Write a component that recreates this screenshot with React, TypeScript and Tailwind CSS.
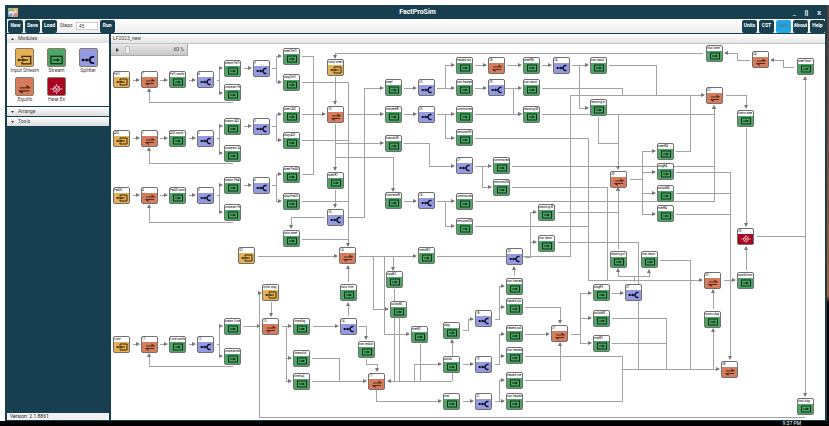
import type { ReactNode } from "react";

type Kind = "input" | "stream" | "splitter" | "equilib" | "heat";
type Node = [kind: Kind, x: number, y: number, label: string];

const colors: Record<Kind, string> = {
  input: "bg-[#e5b056]",
  stream: "bg-[#4fa567]",
  splitter: "bg-[#959be3]",
  equilib: "bg-[#d67c5c]",
  heat: "bg-[#a80522]",
};

const modules: { kind: Kind; name: string }[] = [
  { kind: "input", name: "Input Stream" },
  { kind: "stream", name: "Stream" },
  { kind: "splitter", name: "Splitter" },
  { kind: "equilib", name: "Equilib" },
  { kind: "heat", name: "Heat Ex" },
];

// Sheet coordinates of the canvas' top left corner
const ORIGIN_X = 111;
const ORIGIN_Y = 44;

const nodes: Node[] = [
  ["input", 113, 71, "FeTi"],
  ["equilib", 141, 71, "7"],
  ["stream", 169, 71, "FeTi comb"],
  ["splitter", 197, 71, "8"],
  ["stream", 224, 60, "steam FeTi"],
  ["stream", 224, 84, "unsteam Fe"],
  ["splitter", 253, 60, "9"],
  ["input", 113, 130, "AlO"],
  ["equilib", 141, 130, "1"],
  ["stream", 169, 130, "AlO comb"],
  ["splitter", 197, 130, "2"],
  ["stream", 224, 118, "steam AlO"],
  ["stream", 224, 145, "unsteam Al"],
  ["splitter", 253, 118, "3"],
  ["input", 113, 187, "FeAlO"],
  ["equilib", 141, 187, "4"],
  ["stream", 169, 187, "FeAlO com"],
  ["splitter", 197, 187, "5"],
  ["stream", 224, 177, "steam FeAl"],
  ["stream", 224, 204, "unsteam Fe"],
  ["splitter", 253, 177, "6"],
  ["input", 238, 247, "O2"],
  ["input", 113, 336, "Lime"],
  ["equilib", 141, 336, "11"],
  ["stream", 169, 336, "Lime comb"],
  ["splitter", 197, 336, "12"],
  ["stream", 224, 318, "steam Lime"],
  ["stream", 224, 348, "unsteamed"],
  ["input", 262, 284, "initial slag"],
  ["equilib", 262, 318, "13"],
  ["stream", 283, 48, "steel FeTi"],
  ["stream", 283, 74, "slag FeTi"],
  ["stream", 283, 106, "steel AlO"],
  ["stream", 283, 132, "slag AlO"],
  ["stream", 283, 166, "steel FeAlO"],
  ["stream", 283, 193, "slag FeAlO"],
  ["stream", 283, 230, "ratio steel"],
  ["input", 327, 59, "initial steel"],
  ["equilib", 327, 106, "15"],
  ["stream", 327, 172, "steelR1"],
  ["splitter", 327, 209, "16"],
  ["equilib", 339, 247, "14"],
  ["stream", 340, 284, "ratio lime"],
  ["splitter", 340, 318, "14"],
  ["stream", 293, 318, "limeslag"],
  ["stream", 293, 350, "limesolid"],
  ["stream", 293, 373, "limeliq2"],
  ["stream", 358, 341, "non reduct"],
  ["equilib", 368, 373, "17"],
  ["stream", 385, 79, "steel"],
  ["stream", 385, 106, "hotsteelR"],
  ["stream", 385, 135, "hotsolidR"],
  ["stream", 385, 192, "hotmetalR"],
  ["stream", 386, 271, "slagR2"],
  ["stream", 390, 301, "solidsR2"],
  ["stream", 411, 326, "metR2"],
  ["splitter", 418, 79, "23"],
  ["splitter", 418, 106, "25"],
  ["splitter", 418, 192, "26"],
  ["stream", 418, 247, "metalR2"],
  ["stream", 456, 57, "heated sla"],
  ["equilib", 488, 57, "28"],
  ["stream", 523, 57, "steelR5"],
  ["splitter", 553, 57, "24"],
  ["stream", 590, 57, "non reacti"],
  ["stream", 456, 79, "non heated"],
  ["splitter", 488, 79, "29"],
  ["stream", 523, 79, "non reacti"],
  ["stream", 456, 106, "unremoved"],
  ["stream", 523, 106, "reacting M"],
  ["stream", 590, 99, "reacting st"],
  ["stream", 456, 129, "removed N"],
  ["splitter", 456, 157, "27"],
  ["stream", 493, 157, "unremoved"],
  ["stream", 493, 179, "removed M"],
  ["stream", 456, 193, "unremoved"],
  ["stream", 456, 218, "removed M"],
  ["stream", 538, 204, "reacting M"],
  ["stream", 538, 235, "non reacti"],
  ["splitter", 506, 248, "20"],
  ["stream", 506, 278, "non heated"],
  ["stream", 506, 298, "heated sla"],
  ["stream", 506, 325, "heated soli"],
  ["stream", 506, 347, "non heated"],
  ["stream", 506, 372, "heated me"],
  ["stream", 506, 393, "non heated"],
  ["stream", 443, 322, "slag"],
  ["stream", 443, 356, "solids"],
  ["stream", 443, 393, "met"],
  ["splitter", 475, 310, "18"],
  ["splitter", 475, 356, "19"],
  ["splitter", 475, 393, "22"],
  ["equilib", 551, 325, "21"],
  ["stream", 593, 284, "slagR3"],
  ["stream", 593, 310, "solidsR3"],
  ["stream", 593, 335, "metR3"],
  ["splitter", 625, 284, "37"],
  ["equilib", 610, 171, "30"],
  ["stream", 610, 251, "reacting sl"],
  ["stream", 641, 251, "non reacti"],
  ["stream", 657, 143, "steelR4"],
  ["stream", 657, 163, "slagR4"],
  ["stream", 657, 185, "solidsR4"],
  ["stream", 657, 205, "metR4"],
  ["stream", 706, 45, "final steel"],
  ["equilib", 752, 51, "34"],
  ["stream", 797, 58, "steel hom"],
  ["equilib", 706, 87, "32"],
  ["stream", 737, 110, "homo stee"],
  ["heat", 737, 228, "35"],
  ["equilib", 704, 272, "33"],
  ["stream", 737, 272, "comb hom"],
  ["stream", 704, 311, "homo slag"],
  ["equilib", 721, 361, "38"],
  ["stream", 797, 398, "final slag"],
];

// Connections that end in an arrow head
const arrows = [
  // four feed rows
  "M133 80H139", "M160 80H167", "M189 80H195", "M217 80H219V68H222", "M219 80V93H222", "M244 68H251", "M272 68H276V56H281", "M276 68V82H281", "M233 102H149V89",
  "M133 138H139", "M160 138H167", "M189 138H195", "M217 138H219V126H222", "M219 138V153H222", "M244 126H251", "M272 126H276V114H281", "M276 126V140H281", "M233 163H149V148",
  "M133 195H139", "M160 195H167", "M189 195H195", "M217 195H219V185H222", "M219 195V212H222", "M244 185H251", "M272 185H276V174H281", "M276 185V201H281", "M233 222H149V205",
  "M133 344H139", "M160 344H167", "M189 344H195", "M217 344H219V326H222", "M219 344V356H222", "M233 366H149V354",
  "M243 326H260", "M805 417H259V293H261", "M271 302V316", "M258 256H337",
  // steel making
  "M302 114H325", "M302 82H348V246", "M703 53H335V58", "M335 77V104", "M347 114H383", "M335 124V170", "M335 143H383", "M335 157H393V191",
  "M335 190V207", "M325 217H291V228", "M347 217H364V88H383", "M404 88H416", "M404 114H416", "M404 201H416", "M404 143H429V166H454",
  "M437 88H445V65H454", "M437 114H454", "M445 114V138H454", "M437 201H454", "M445 201V226H454",
  // slag and lime
  "M359 256H416", "M393 256V270", "M373 256V309H388", "M384 256V334H409", "M437 256H570V95H704",
  "M452 381H388", "M452 381V340", "M414 381V364H441", "M376 390V401H441", "M348 282V266", "M348 316V303", "M313 326H338",
  "M282 326H291", "M286 326V358H291", "M286 358V381H291", "M312 381H366", "M359 326H366V339", "M366 359V364H377V371",
  "M475 65H486", "M507 65H521", "M542 65H551", "M572 65H588", "M579 65V108H588", "M475 88H486", "M505 88H521", "M513 88V114H521",
  "M437 88H454", "M542 114H714V106", "M475 114H521", "M618 114V169", "M475 166H491", "M482 166V187H491", "M475 138H588V280H702",
  "M525 257H530V212H536", "M530 257V242H536", "M558 212H618V188", "M618 249V188", "M514 276V267", "M634 282V276H618V269", "M634 276H649V270",
  "M630 179H642V151H655", "M642 172H655", "M642 179V193H655", "M642 193V214H655", "M676 172H730V359", "M475 201H714V106",
  // tail end
  "M746 128V226", "M746 270V247", "M724 280H735", "M713 309V290", "M713 369V329", "M805 236V77", "M805 236V396", "M622 369H719",
  "M612 293H623", "M571 334H580V293H591", "M580 318H591", "M580 334V343H591", "M525 307H560V323", "M525 334H549", "M525 380H560V343",
  "M463 330H468V319H473", "M463 364H473", "M463 401H473", "M495 319H499V286H504", "M499 307H504", "M495 364H499V334H504", "M499 356H504", "M495 401H504", "M499 401V380H504",
  "M750 60H737V53H725", "M794 67H783V60H771", "M726 95H746V108",
];

// Connections that join another line
const joins = [
  "M302 56H313V174H302", "M302 140H348", "M302 201H348", "M302 239H348", "M312 358H339V381",
  "M394 289V381", "M399 318V381", "M420 344V381", "M609 65H656V95", "M542 88H622V95", "M598 117V143H618",
  "M512 166H714", "M512 187H607V280", "M475 226H588", "M558 242H638V369", "M676 151H690V95",
  "M676 193H730", "M676 214H730", "M757 236H805", "M660 260H690V369", "M612 318H666V369", "M612 343H666",
  "M525 356H622V401H525",
];

const glyphs: Record<Kind, ReactNode> = {
  input: (
    <>
      <path d="M8 5V2h14v12H8v-3" fill="none" stroke="#3a2a08" strokeWidth="2" />
      <path d="M2 8h16" stroke="#3a2a08" strokeWidth="2" />
      <circle cx="3" cy="8" r="2" fill="#3a2a08" />
      <path d="M9 5v6l4-3z" fill="#3a2a08" />
    </>
  ),
  stream: (
    <>
      <rect x="3" y="2" width="18" height="12" fill="none" stroke="#0b3016" strokeWidth="2" />
      <path d="M6 8h9" stroke="#0b3016" strokeWidth="2" />
      <path d="M13 5v6l5-3z" fill="#0b3016" />
    </>
  ),
  splitter: (
    <>
      <path d="M2 8h12" stroke="#0c0d22" strokeWidth="2" />
      <circle cx="3" cy="8" r="2" />
      <path d="M8 5v6l4-3z" />
      <path d="M21 3h-3q-4 1-4 5t4 5h3" fill="none" stroke="#0c0d22" strokeWidth="3" />
    </>
  ),
  equilib: (
    <>
      <path d="M4 6h17M20 11H3" fill="none" stroke="#5a2a1a" strokeWidth="2" />
      <path d="M15 1l7 5h-7zM9 16l-7-5h7z" fill="#5a2a1a" />
    </>
  ),
  heat: (
    <g fill="none" stroke="#fff" strokeWidth="1">
      <circle cx="12" cy="8" r="5" />
      <path d="M2 8h6l2-3 3 6 2-3h7M12 0v3M12 13v3M7 13l10-10" />
    </g>
  ),
};

function Glyph({ kind, className }: { kind: Kind; className: string }) {
  return (
    <svg viewBox="0 0 24 16" className={className} aria-hidden="true">
      {glyphs[kind]}
    </svg>
  );
}

function ToolButton({ children, active }: { children: string; active?: boolean }) {
  return (
    <button
      className={
        active
          ? "flex h-[13px] w-[15px] items-center justify-center rounded-[2px] bg-[#22a5e5] text-[5px] font-bold text-[#4b7f9c]"
          : "flex h-[13px] w-[15px] items-center justify-center rounded-[2px] bg-[#173f50] text-[5px] font-bold text-white"
      }
    >
      {children}
    </button>
  );
}

function PanelHeader({ title, open }: { title: string; open?: boolean }) {
  return (
    <button
      aria-expanded={!!open}
      className="flex h-[9px] w-full items-center gap-1 bg-linear-to-b from-white to-[#dcdcdc] px-1 text-[5px] text-[#444]"
    >
      <svg viewBox="0 0 6 4" className="h-[2px] w-[3px]" aria-hidden="true">
        <path d={open ? "M0 4h6L3 0z" : "M0 0h6L3 4z"} fill="#333" />
      </svg>
      {title}
    </button>
  );
}

function FlowNode({ node }: { node: Node }) {
  const [kind, x, y, label] = node;
  return (
    <div
      className={`absolute flex h-[17px] w-[17px] flex-col overflow-hidden rounded-[2px] border border-[#707070] ${colors[kind]}`}
      style={{ left: x - ORIGIN_X, top: y - ORIGIN_Y }}
    >
      <span className="h-[5px] shrink-0 bg-white text-[3px] leading-[5px] whitespace-nowrap text-black">{label}</span>
      <div className="flex flex-1 items-center justify-center">
        <Glyph kind={kind} className="h-2 w-3" />
      </div>
    </div>
  );
}

function Canvas() {
  return (
    <div className="relative min-h-[375px] flex-1 overflow-hidden bg-white">
      <svg
        className="absolute top-0 left-0 h-[376px] w-[715px]"
        viewBox="111 44 715 376"
        fill="none"
        stroke="#a3a3a3"
        aria-hidden="true"
      >
        <defs>
          <marker id="head" viewBox="0 0 4 4" refX="3" refY="2" markerWidth="4" markerHeight="4" orient="auto">
            <path d="M0 0L4 2L0 4z" fill="#777" stroke="none" />
          </marker>
        </defs>
        <g shapeRendering="crispEdges">
          {joins.map((d) => (
            <path key={d} d={d} />
          ))}
          {arrows.map((d) => (
            <path key={d} d={d} markerEnd="url(#head)" />
          ))}
        </g>
      </svg>
      {nodes.map((node) => (
        <FlowNode key={`${node[1]}-${node[2]}`} node={node} />
      ))}
      <label className="absolute top-0 left-0 flex h-3 w-[77px] items-center justify-between border-r border-b border-[#aaa] bg-linear-to-b from-[#e8e8e8] to-[#c8c8c8] pr-[3px] pl-[5px] text-[5px] text-[#444]">
        <svg viewBox="0 0 4 6" className="h-1 w-[3px]" aria-hidden="true">
          <path d="M0 0v6l4-3z" fill="#222" />
        </svg>
        <input
          type="range"
          aria-label="Zoom"
          defaultValue={2}
          className="h-2 w-11 appearance-none bg-transparent [&::-webkit-slider-thumb]:h-2 [&::-webkit-slider-thumb]:w-[5px] [&::-webkit-slider-thumb]:appearance-none [&::-webkit-slider-thumb]:rounded-[1px] [&::-webkit-slider-thumb]:border [&::-webkit-slider-thumb]:border-[#bbb] [&::-webkit-slider-thumb]:bg-[#eee]"
        />
        60 %
      </label>
    </div>
  );
}

function App() {
  return (
    <div className="flex min-h-screen flex-col bg-white pt-[5px] font-[Roboto,'Liberation_Sans',sans-serif]">
      <div className="flex flex-1 pl-[5px]">
        <div className="flex min-w-0 flex-1 flex-col bg-[#173f50]">
          <header className="flex h-[14px] items-center justify-between pr-[6px] pl-[3px] text-white">
            <svg viewBox="0 0 10 9" className="h-[9px] w-[10px]" aria-hidden="true">
              <path d="M0 0h10v9H0z" fill="#d9d6c8" />
              <path d="M0 0h5v4H0z" fill="#9ab98c" />
              <path d="M5 0h5v4H5z" fill="#e3b077" />
              <path d="M0 5h4v4H0z" fill="#7399c8" />
              <path d="M5 5h5v4H5z" fill="#d78d86" />
              <path d="M1 7l2-4 2 3 3-4" fill="none" stroke="#fff" />
            </svg>
            <h1 className="pl-6 text-[7px] font-bold">FactProSim</h1>
            <div className="flex w-7 justify-between text-[6px] font-bold">
              <button aria-label="Minimize">_</button>
              <button aria-label="Maximize">[]</button>
              <button aria-label="Close">X</button>
            </div>
          </header>

          <div className="mx-[2px] flex h-[14px] items-center gap-[2px] bg-linear-to-b from-white to-[#ececec] pl-px">
            <ToolButton>New</ToolButton>
            <ToolButton>Save</ToolButton>
            <ToolButton>Load</ToolButton>
            <label htmlFor="steps" className="px-px text-[5px] text-[#444]">
              Steps
            </label>
            <input id="steps" defaultValue="45" className="h-2 w-[22px] border border-[#ccc] bg-white px-[2px] text-[5px] text-[#444]" />
            <ToolButton>Run</ToolButton>
            <div className="ml-auto flex gap-[2px]">
              <ToolButton>Units</ToolButton>
              <ToolButton>CST</ToolButton>
              <ToolButton active>Stop</ToolButton>
              <ToolButton>About</ToolButton>
              <ToolButton>Help</ToolButton>
            </div>
          </div>

          <div className="mx-[2px] mt-px mb-px flex flex-1 gap-[2px]">
            <aside className="flex w-[102px] shrink-0 flex-col gap-px">
              <div>
                <PanelHeader title="Modules" open />
                <div className="grid grid-cols-3 gap-y-[3px] bg-white pt-[5px] pr-[5px] pb-[3px] pl-[2px]">
                  {modules.map((m) => (
                    <button key={m.kind} className="flex flex-col items-center text-[5px] leading-[7px] whitespace-nowrap text-[#444]">
                      <span className={`flex h-[19px] w-[19px] items-end justify-center rounded-[2px] border border-[#8a7a6a] pb-px ${colors[m.kind]}`}>
                        <Glyph kind={m.kind} className="h-[10px] w-[15px]" />
                      </span>
                      {m.name}
                    </button>
                  ))}
                </div>
              </div>
              <PanelHeader title="Arrange" />
              <PanelHeader title="Tools" />
              <p className="mt-auto h-[7px] bg-[#f1f1f1] px-[3px] text-[5px] leading-[7px] text-[#222]">Version: 2.1.8861</p>
            </aside>

            <main className="flex min-w-0 flex-1 flex-col">
              <h2 className="h-[10px] border-b border-[#c4c4c4] bg-linear-to-b from-white to-[#e6e6e6] px-[2px] text-[5px] leading-[9px] text-[#444]">
                LF2023_new
              </h2>
              <Canvas />
            </main>
          </div>
        </div>
        <div className="w-[2px] bg-linear-to-b from-[#5a4038] from-10% via-[#a8653a] via-70% to-black to-72%" />
      </div>
      <footer className="flex h-[5px] items-start justify-end overflow-hidden bg-black px-7 text-[5px] leading-[5px] text-white">
        9:37 PM
      </footer>
    </div>
  );
}

export default App;
